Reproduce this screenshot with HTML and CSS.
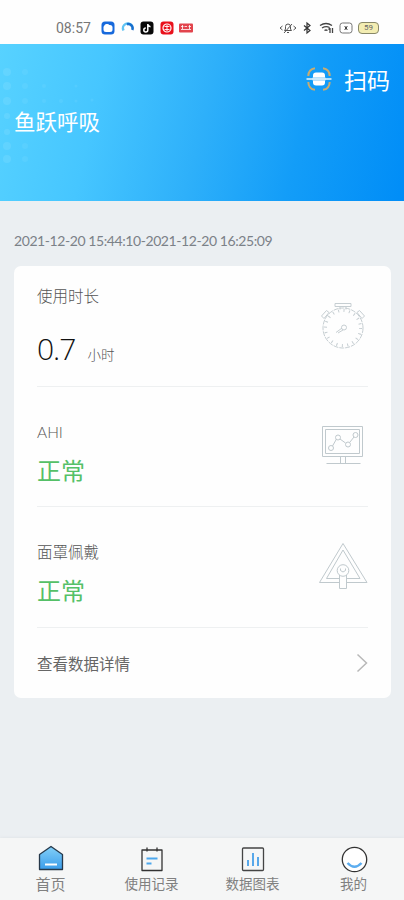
FILE: index.html
```
<!DOCTYPE html>
<html lang="zh-CN">
<head>
    <meta charset="UTF-8">
    <meta name="viewport" content="width=device-width, initial-scale=1.0">
    <title>鱼跃呼吸</title>
    <link rel="stylesheet" href="styles.css">
</head>
<body>
    <div class="status-bar">
        <span class="time">08:57</span>
        <div class="apps">
            <svg width="14" height="14" viewBox="0 0 14 14"><rect x=".5" y=".5" width="13" height="13" rx="3.5" fill="#1769dc"/><rect x="2.5" y="4" width="9" height="7" rx="2.5" fill="#fff"/><rect x="3.5" y="3" width="5" height="4" rx="2" fill="#fff"/></svg>
            <svg width="14" height="14" viewBox="0 0 14 14" fill="none"><path d="M2.5 9.5A4.6 4.6 0 0 1 11 5" stroke="#62c4f3" stroke-width="2.5"/><path d="M6 3.3A4.3 4.3 0 0 1 11.3 9" stroke="#166fce" stroke-width="2.5"/></svg>
            <svg width="14" height="14" viewBox="0 0 14 14"><rect x=".5" y=".5" width="13" height="13" rx="3" fill="#080808"/><path d="M7.8 3v6a2 2 0 1 1-2-2M7.8 3.5c.4 1.5 1.3 2 2.7 2.2" fill="none" stroke="#fff" stroke-width="1.5"/></svg>
            <svg width="14" height="14" viewBox="0 0 14 14"><rect x=".5" y=".5" width="13" height="13" rx="3" fill="#e9111c"/><circle cx="7" cy="7" r="4" fill="none" stroke="#fff" stroke-width="1.2"/><path d="M4.5 5.5h5M4.5 8.5h5M7 4v6" stroke="#fff" stroke-width=".9"/></svg>
            <svg width="14" height="14" viewBox="0 0 14 14"><rect y="2.5" width="14" height="9" rx="1" fill="#e2444d"/><path d="M2 5.5h2.5M5.5 5.5h2.5M9.5 5.5h2.5M2 8.5h10M3.5 4v4M10.5 4v4" stroke="#fff" stroke-width=".8"/></svg>
        </div>
        <div class="signals">
            <svg width="18" height="14" viewBox="0 0 18 14" fill="none" stroke="#555"><path d="M5.5 9.5h7l-1-1.5V5.5a2.5 2.5 0 0 0-5 0V8zM8 11.5h2M3.5 5L1 7l2.5 2M14.5 5L17 7l-2.5 2M5 12l8-9"/></svg>
            <svg width="12" height="14" viewBox="0 0 12 14" fill="none" stroke="#333" stroke-width="1.2"><path d="M2 4.5l6 5-3 2.5V2l3 2.5-6 5"/></svg>
            <svg width="15" height="14" viewBox="0 0 15 14" fill="none" stroke="#444" stroke-width="1.3"><path d="M1 4.5Q7 .5 13 4.5M3 7q4-2.500 7.500-.5M5.500 9.500q1.500-1 3 0M11 7v5M9.500 8.500L11 7M13.500 7v5"/></svg>
            <svg width="14" height="14" viewBox="0 0 14 14" fill="none" stroke="#777"><rect x="1" y="2" width="12" height="10" rx="2.5"/><path d="M5.5 5.5l3 3m0-3l-3 3M7 5v4" stroke="#444"/></svg>
            <div class="battery">59</div>
        </div>
    </div>

    <div class="hero">
        <svg class="dots" width="100" height="130" viewBox="0 0 100 130" fill="#8de2ff">
            <g opacity=".25"><circle cx="7" cy="28" r="4"/><circle cx="7" cy="42" r="4"/><circle cx="7" cy="57" r="4"/><circle cx="7" cy="72" r="3"/><circle cx="7" cy="88" r="3"/><circle cx="7" cy="102" r="4"/><circle cx="7" cy="115" r="4"/></g>
            <g opacity=".15"><circle cx="25" cy="28" r="3"/><circle cx="25" cy="42" r="3"/><circle cx="25" cy="57" r="3"/><circle cx="25" cy="102" r="3"/><circle cx="25" cy="115" r="3"/><circle cx="44" cy="42" r="2"/><circle cx="44" cy="57" r="2"/><circle cx="61" cy="57" r="2"/><circle cx="76" cy="42" r="1.5"/><circle cx="76" cy="57" r="1.5"/><circle cx="92" cy="56" r="1.5"/></g>
        </svg>
        <div class="scan">
            <svg width="26" height="24" viewBox="0 0 26 24" fill="none"><path d="M9 1.2Q2.5 2 2.3 9M2.3 15Q2.5 22 9 22.8M17 1.2q6.5.8 6.7 7.8M23.7 15q-.2 7-6.7 7.8" stroke="#c9ac70" stroke-width="2"/><rect x="7" y="5.5" width="12" height="13" rx="3" fill="#fff"/><path d="M6 12h14" stroke="#6fc1f6" stroke-width="3"/><path d="M.5 12h25" stroke="#e6f7ff" stroke-width="1.5"/></svg>
            <span>扫码</span>
        </div>
        <h1>鱼跃呼吸</h1>
    </div>

    <div class="content">
        <div class="period">2021-12-20 15:44:10-2021-12-20 16:25:09</div>
        <div class="card">
            <div class="row">
                <div>
                    <div class="label">使用时长</div>
                    <div class="number">0.7<span>小时</span></div>
                </div>
                <svg class="icon" width="50" height="50" viewBox="0 0 50 50" fill="none" stroke="#c6ced2">
                    <circle cx="25" cy="28" r="20" stroke-dasharray="5 1"/>
                    <circle cx="25" cy="28" r="17.5" stroke-width="3" stroke-dasharray="1 4.5"/>
                    <path d="M17 3.5h16v3H17zM22 6.5v3M28 6.5v3M3.5 16l5-5.5 2.5 2-5 6zM46.5 16l-5-5.5-2.5 2 5 6zM18 32.5l6-4.5M20 33l5-3"/>
                    <circle cx="26" cy="27.5" r="2.5"/>
                </svg>
            </div>
            <div class="row">
                <div>
                    <div class="label">AHI</div>
                    <div class="state">正常</div>
                </div>
                <svg class="icon" width="50" height="50" viewBox="0 0 50 50" fill="none" stroke="#c0c9cd">
                    <path d="M4.5 5.5h40v30h-40zM7.5 8.5h34v24h-34zM22.5 35.5v7M27.5 35.5v7M8.5 42.5h34M14.5 25l4-7M22 18l5.5 4M32 21l4-5"/>
                    <circle cx="13" cy="27" r="2.5"/><circle cx="20" cy="16.5" r="2.5"/><circle cx="30" cy="23.5" r="2.5"/><circle cx="37.5" cy="14" r="2.5"/>
                </svg>
            </div>
            <div class="row">
                <div>
                    <div class="label">面罩佩戴</div>
                    <div class="state">正常</div>
                </div>
                <svg class="icon" width="50" height="50" viewBox="0 0 50 50" fill="none" stroke="#c0c9cd">
                    <path d="M21 41.5H1.5L25 2.5l24 39H29M21 37.5H8.5L25 9l17 28.5H29M21.5 34v13.5h7V34M22.5 27.5v2q2.5 3 5 0v-2"/>
                    <circle cx="25" cy="29.5" r="5.8"/>
                </svg>
            </div>
            <div class="detail">
                <span>查看数据详情</span>
                <svg width="12" height="20" viewBox="0 0 12 20" fill="none" stroke="#b8b8b8" stroke-width="1.5"><path d="M1.5 1.5l9 8.5-9 8.5"/></svg>
            </div>
        </div>
    </div>

    <div class="tabs">
        <div class="tab active">
            <svg width="28" height="28" viewBox="0 0 28 28"><defs><linearGradient id="home" x2="0" y2="1"><stop stop-color="#83d0f8"/><stop offset="1" stop-color="#3b9deb"/></linearGradient></defs><path d="M2.5 9.5L14 1.5l11.5 8v15h-23z" fill="url(#home)" stroke="#26384a" stroke-width="1.3" stroke-linejoin="round"/><path d="M8 19.5h12" stroke="#fff" stroke-width="2"/></svg>
            <span>首页</span>
        </div>
        <div class="tab">
            <svg width="28" height="28" viewBox="0 0 28 28" fill="none"><path d="M4 5h20v20.5H4zM9 2.500v4M19 2.500v4" stroke="#333" stroke-width="1.3" stroke-linejoin="round"/><path d="M8.5 13.5h11M8.5 18.5h5" stroke="#4ca7ed" stroke-width="2"/></svg>
            <span>使用记录</span>
        </div>
        <div class="tab">
            <svg width="28" height="28" viewBox="0 0 28 28" fill="none"><rect x="3.5" y="3" width="21" height="22.5" rx="1" stroke="#444" stroke-width="1.3"/><path d="M9 21v-6M14 21V8M19 21v-9" stroke="#58a8ea" stroke-width="2"/></svg>
            <span>数据图表</span>
        </div>
        <div class="tab">
            <svg width="28" height="28" viewBox="0 0 28 28" fill="none"><circle cx="14.5" cy="14.5" r="12.2" fill="#fff" stroke="#333" stroke-width="1.3"/><path d="M7.5 18q7 7.500 14 0" stroke="#5cadef" stroke-width="2.5"/></svg>
            <span>我的</span>
        </div>
    </div>
</body>
</html>
```
FILE: styles.css
```
* {
    box-sizing: border-box;
}
body {
    margin: 0;
    height: 900px;
    display: flex;
    flex-direction: column;
    background-color: #ebeff2;
    font-family: Lato, "Noto Sans CJK SC", sans-serif;
    color: #666;
    overflow: hidden;
}
svg {
    display: block;
    flex: none;
}
.status-bar {
    height: 44px;
    padding: 20.5px 25px 0 56px;
    display: flex;
    align-items: flex-start;
    background-color: #fefefe;
}
.time {
    width: 45px;
    font-family: Roboto, sans-serif;
    font-size: 14px;
    line-height: 15px;
    color: #777;
}
.apps {
    display: flex;
    gap: 5.5px;
}
.signals {
    display: flex;
    gap: 5px;
    margin-left: auto;
}
.battery {
    width: 21px;
    height: 12px;
    margin-top: 1px;
    border: 1px solid #888868;
    border-radius: 4px;
    background-color: #f3edb2;
    font: 8px/10px Roboto, sans-serif;
    text-align: center;
}
.hero {
    position: relative;
    height: 157px;
    padding: 18px 14px 0;
    background: linear-gradient(103deg, #57d2ff 0%, #46c6ff 25%, #2eb0fa 50%, #139df8 73%, #008df7 100%);
    color: #fff;
}
.dots {
    position: absolute;
    left: 0;
    top: 0;
}
.scan {
    display: flex;
    justify-content: flex-end;
    align-items: center;
    gap: 12px;
    height: 34px;
    font-size: 23px;
}
.hero h1 {
    margin: 9px 0 0;
    font-size: 21.5px;
    line-height: 34px;
    font-weight: 400;
}
.content {
    flex: 1;
    padding: 24px 13px 0 14px;
}
.period {
    height: 41px;
    font-size: 14px;
    line-height: 31px;
    letter-spacing: -0.42px;
    color: #7b8188;
}
.card {
    height: 432px;
    padding: 0 23px;
    border-radius: 7px;
    background-color: #fefefe;
}
.row {
    height: 120.5px;
    display: flex;
    justify-content: space-between;
    border-bottom: 1px solid #eef0f1;
}
.label {
    margin-top: 19px;
    font-size: 15.5px;
    line-height: 22px;
    font-weight: 300;
    color: #555;
}
.number {
    display: flex;
    align-items: baseline;
    margin-top: 22px;
    font-family: "Open Sans", "Noto Sans CJK SC", sans-serif;
    font-size: 30px;
    line-height: 40px;
    font-weight: 300;
    letter-spacing: -1px;
    color: #111;
}
.number span {
    margin-left: 12px;
    font-size: 13.5px;
    line-height: 38px;
    letter-spacing: 0;
    color: #555;
}
.state {
    margin-top: 12px;
    font-size: 24px;
    line-height: 32px;
    color: #55c067;
}
.row + .row .label {
    margin-top: 34px;
}
.icon {
    margin-top: 34px;
}
.detail {
    height: 71px;
    display: flex;
    justify-content: space-between;
    align-items: center;
    font-size: 15.5px;
    color: #666;
}
.tabs {
    height: 62px;
    display: grid;
    grid-template-columns: repeat(4, 1fr);
    background-color: #f5f6f6;
    box-shadow: 0 0 3px #dde0e3;
}
.tab {
    display: flex;
    flex-direction: column;
    align-items: center;
    padding-top: 7px;
    font-size: 13.5px;
    line-height: 22px;
    color: #808080;
}
.tab.active {
    font-size: 15px;
}
```
